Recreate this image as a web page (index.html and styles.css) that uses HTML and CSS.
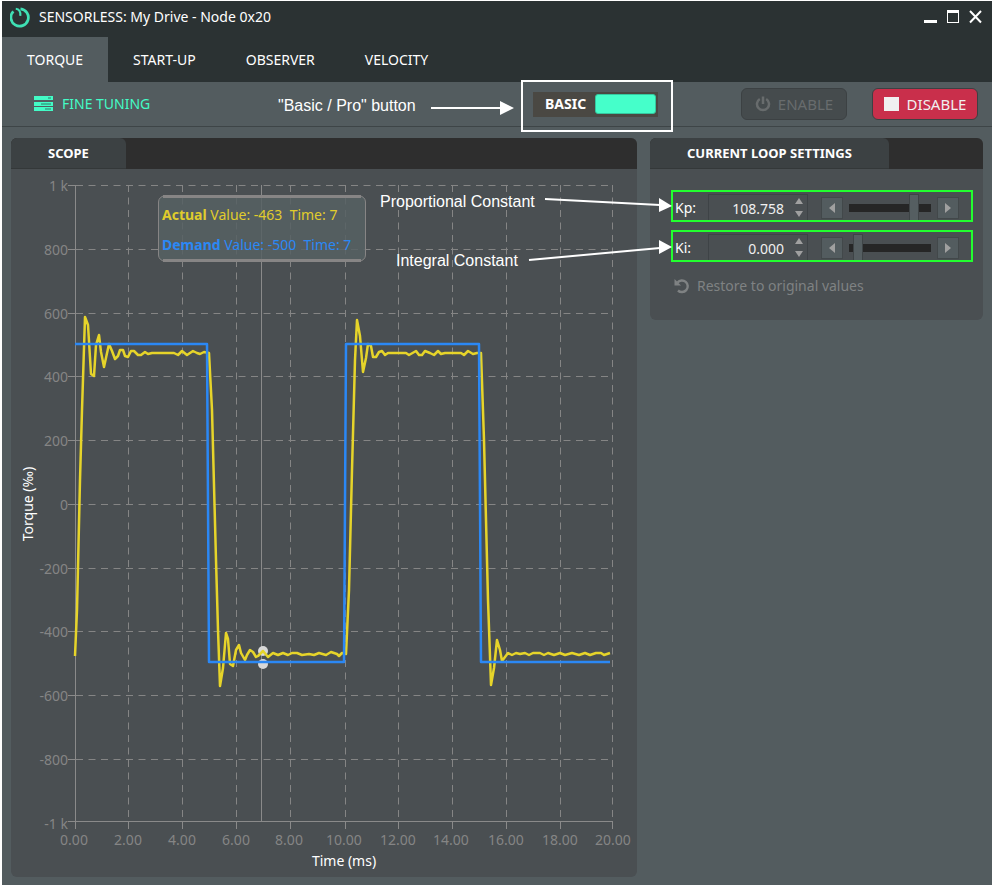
FILE: index.html
```html
<!DOCTYPE html>
<html lang="en">

<head>
  <meta charset="UTF-8">
  <meta name="viewport" content="width=device-width, initial-scale=1.0">
  <title>SENSORLESS: My Drive - Node 0x20</title>
  <link rel="stylesheet" href="styles.css">
</head>

<body>
  <div class="app">
    <header class="titlebar">
      <svg class="logo" viewBox="0 0 20 20" aria-hidden="true">
        <path d="M3.200 4.200A8.300 8.300 0 1 0 10 1.700" />
        <path class="tail" d="M5.500 1.700C8.500 2 10.200 4.500 9.800 8.500" />
      </svg>
      <h1>SENSORLESS: My Drive - Node 0x20</h1>
      <div class="window-buttons">
        <button type="button" aria-label="Minimize">
          <svg viewBox="0 0 14 14"><path d="M1 10h13v3H1z" /></svg>
        </button>
        <button type="button" aria-label="Maximize">
          <svg viewBox="0 0 14 14"><path d="M1 0h12v13H1zM2 3v9h10V3z" fill-rule="evenodd" /></svg>
        </button>
        <button type="button" aria-label="Close">
          <svg viewBox="0 0 14 14"><path class="cross" d="M1 1l11 11.500M12 1L1 12.500" /></svg>
        </button>
      </div>
    </header>

    <nav class="tabs">
      <a class="current" href="#torque">TORQUE</a>
      <a href="#startup">START-UP</a>
      <a href="#observer">OBSERVER</a>
      <a href="#velocity">VELOCITY</a>
    </nav>

    <div class="toolbar">
      <h2 class="tuning">
        <svg viewBox="0 0 20 16" aria-hidden="true">
          <path d="M0 0h19v4H0zM0 6h19v4H0zM0 11h19v4H0z" />
          <path class="hole" d="M14 1.500h3v1h-3zM7 7.500h10v1H7zM11 12.500h6v1h-6z" />
        </svg>
        FINE TUNING
      </h2>
      <label class="mode">
        BASIC
        <input type="checkbox" checked>
      </label>
      <div class="actions">
        <button type="button" class="enable" disabled>
          <svg viewBox="0 0 16 16" aria-hidden="true"><path d="M4.800 3A6 6 0 1 0 11.200 3M8 0.500V8" /></svg>
          ENABLE
        </button>
        <button type="button" class="disable">
          <svg viewBox="0 0 16 16" aria-hidden="true"><path d="M0 1h15v14H0z" /></svg>
          DISABLE
        </button>
      </div>
    </div>

    <main class="content">
      <section class="panel">
        <div class="panel-head">
          <h3>SCOPE</h3>
        </div>
        <svg class="chart" viewBox="11 169 626 708" role="img" aria-label="Torque scope">
          <!-- grid -->
          <g class="grid">
            <path d="M76 185.500H612M76 249.500H612M76 313.500H612M76 376.500H612M76 440.500H612M76 504.500H612M76 568.500H612M76 631.500H612M76 695.500H612M76 759.500H612" />
            <path d="M128.500 185V821M182.500 185V821M236.500 185V821M290.500 185V821M345.500 185V821M398.500 185V821M452.500 185V821M506.500 185V821M560.500 185V821M612.500 185V821" />
          </g>
          <!-- axes -->
          <g class="axis">
            <path d="M75.500 185V829M68 821.500H613" />
            <path d="M68 185.500H75M68 249.500H75M68 313.500H75M68 376.500H75M68 440.500H75M68 504.500H75M68 568.500H75M68 631.500H75M68 695.500H75M68 759.500H75" />
            <path d="M128.500 821V829M182.500 821V829M236.500 821V829M290.500 821V829M345.500 821V829M398.500 821V829M452.500 821V829M506.500 821V829M560.500 821V829M612.500 821V829" />
            <path d="M261.500 185V821" />
          </g>
          <g class="labels labels-y">
            <text x="68" y="191">1 k</text>
            <text x="68" y="255">800</text>
            <text x="68" y="319">600</text>
            <text x="68" y="382">400</text>
            <text x="68" y="446">200</text>
            <text x="68" y="510">0</text>
            <text x="68" y="574">-200</text>
            <text x="68" y="637">-400</text>
            <text x="68" y="701">-600</text>
            <text x="68" y="765">-800</text>
            <text x="68" y="829">-1 k</text>
          </g>
          <g class="labels labels-x">
            <text x="74" y="845">0.00</text>
            <text x="128" y="845">2.00</text>
            <text x="182" y="845">4.00</text>
            <text x="236" y="845">6.00</text>
            <text x="289" y="845">8.00</text>
            <text x="344" y="845">10.00</text>
            <text x="398" y="845">12.00</text>
            <text x="451" y="845">14.00</text>
            <text x="506" y="845">16.00</text>
            <text x="560" y="845">18.00</text>
            <text x="613" y="845">20.00</text>
          </g>
          <text class="axis-title" x="344" y="866">Time (ms)</text>
          <text class="axis-title" transform="translate(33 504) rotate(-90)">Torque (‰)</text>

          <!-- traces -->
          <circle class="marker" cx="263" cy="651" r="5" />
          <circle class="marker" cx="263" cy="664" r="5" />
          <polyline class="trace actual" points="75,656 77,610 80,480 82,410 85,317 88,325 91,374 94,376 96,345 99,335 101,352 104,367 109,344 112,351 115,359 118,356 120,350 123,350 125,356 128,357 131,351 134,351 138,355 141,355 145,352 148,354 152,353 174,353 178,355 182,351 187,355 193,351 197,353 200,354 204,352 209,353 212,410 216,560 218,630 220,686 223,668 226,633 228,639 230,664 233,666 236,650 239,645 241,653 245,660 247,655 250,650 253,652 256,657 258,656 263,651 268,657 273,653 278,655 283,653 288,655 292,653 297,653 302,655 309,654 314,655 319,653 326,655 331,652 337,654 339,656 342,653 346,654 349,590 352,470 355,360 357,320 360,336 363,372 366,358 368,344 371,346 373,357 376,357 379,352 382,351 385,355 388,353 406,353 409,355 416,351 419,355 422,355 425,351 430,353 434,355 438,351 441,354 445,353 461,353 464,355 468,351 473,354 477,353 481,353 484,440 488,600 491,685 494,668 497,640 500,650 502,661 505,657 508,653 512,655 516,653 520,654 525,653 529,655 533,653 540,653 544,655 548,653 554,655 560,653 565,655 572,653 579,655 585,653 590,655 596,653 601,653 604,655 610,653" />
          <polyline class="trace demand" points="75,344 207,344 209,662 344,662 346,344 479,344 481,662 610,662" />

          <!-- readout -->
          <rect class="readout" x="158.500" y="196" width="207" height="65" rx="6" />
          <path class="readout-edge" d="M163 196.500H361M163 260.500H361" />
          <text class="readout-actual" x="162" y="220"><tspan class="series">Actual</tspan> Value: -463&nbsp; Time: 7</text>
          <text class="readout-demand" x="162" y="250"><tspan class="series">Demand</tspan> Value: -500&nbsp; Time: 7</text>
        </svg>
      </section>

      <section class="panel">
        <div class="panel-head">
          <h3>CURRENT LOOP SETTINGS</h3>
        </div>
        <div class="settings">
          <div class="row">
            <label for="kp">Kp:</label>
            <div class="number">
              <input id="kp" type="text" value="108.758">
              <div class="spin">
                <button type="button" aria-label="Increase Kp"><svg viewBox="0 0 8 6"><path d="M0 6L4 0L8 6z" /></svg></button>
                <button type="button" aria-label="Decrease Kp"><svg viewBox="0 0 8 6"><path d="M0 0L4 6L8 0z" /></svg></button>
              </div>
            </div>
            <button type="button" class="step" aria-label="Kp down"><svg viewBox="0 0 6 10"><path d="M6 0L0 5L6 10z" /></svg></button>
            <input class="slider" type="range" min="0" max="100" value="83" aria-label="Kp slider">
            <button type="button" class="step" aria-label="Kp up"><svg viewBox="0 0 6 10"><path d="M0 0L6 5L0 10z" /></svg></button>
          </div>
          <div class="row">
            <label for="ki">Ki:</label>
            <div class="number">
              <input id="ki" type="text" value="0.000">
              <div class="spin">
                <button type="button" aria-label="Increase Ki"><svg viewBox="0 0 8 6"><path d="M0 6L4 0L8 6z" /></svg></button>
                <button type="button" aria-label="Decrease Ki"><svg viewBox="0 0 8 6"><path d="M0 0L4 6L8 0z" /></svg></button>
              </div>
            </div>
            <button type="button" class="step" aria-label="Ki down"><svg viewBox="0 0 6 10"><path d="M6 0L0 5L6 10z" /></svg></button>
            <input class="slider" type="range" min="0" max="100" value="6" aria-label="Ki slider">
            <button type="button" class="step" aria-label="Ki up"><svg viewBox="0 0 6 10"><path d="M0 0L6 5L0 10z" /></svg></button>
          </div>
          <button type="button" class="restore" disabled>
            <svg viewBox="0 0 16 16" aria-hidden="true">
              <path class="arc" d="M3.500 4.500A5.800 5.800 0 1 1 4 12.500" />
              <path d="M0.500 1V7.500H7z" />
            </svg>
            Restore to original values
          </button>
        </div>
      </section>
    </main>

    <!-- callouts over the window -->
    <svg class="callouts" viewBox="0 0 990 300">
      <text x="276" y="110">"Basic / Pro" button</text>
      <text x="378" y="206">Proportional Constant</text>
      <text x="394" y="265">Integral Constant</text>
      <path class="shaft" d="M429 107H500M543 198L658 204M527 259L658 247" />
      <path d="M498 100L512 107L498 114zM657 197L670 205L657 211zM657 239L670 246L657 253z" />
    </svg>
  </div>
</body>

</html>
```
FILE: styles.css
```css
* {
  box-sizing: border-box;
  margin: 0;
  padding: 0;
}

body {
  background-color: #fff;
  color: #fff;
  font: 14px/20px "Noto Sans", "Open Sans", sans-serif;
}

button,
input {
  font: inherit;
  color: inherit;
}

button {
  border: none;
  background: none;
}

h1,
h2 {
  font-size: 14px;
  font-weight: normal;
}

.app {
  position: relative;
  margin: 1px 0 0 2px;
  min-height: calc(100vh - 1px);
  background-color: #535c5f;
}

.titlebar {
  display: flex;
  align-items: center;
  gap: 8px;
  height: 36px;
  padding: 0 9px 4px 8px;
  background-color: #2b3233;
}

.logo {
  width: 21px;
  height: 21px;
  fill: none;
  stroke: #3fe0b4;
  stroke-width: 2.6;
}

.logo .tail {
  stroke-width: 2;
}

.window-buttons {
  display: flex;
  gap: 9px;
  margin-left: auto;
}

.window-buttons svg {
  display: block;
  width: 14px;
  height: 14px;
  fill: #fff;
}

.window-buttons .cross {
  stroke: #fff;
  stroke-width: 2;
}

.tabs {
  display: flex;
  height: 45px;
  background-color: #2b3233;
}

.tabs a {
  padding: 0 25px;
  color: #fff;
  line-height: 45px;
  text-decoration: none;
}

.tabs .current {
  background-color: #535c5f;
}

.toolbar {
  display: flex;
  align-items: center;
  height: 45px;
  padding: 0 14px 0 32px;
  border-bottom: 1px solid #3e4547;
}

.tuning {
  display: flex;
  align-items: center;
  gap: 8px;
  color: #43fbc6;
}

.tuning svg {
  width: 20px;
  height: 16px;
  fill: #43fbc6;
}

.tuning .hole {
  fill: #2f7a68;
}

.mode {
  position: relative;
  display: flex;
  align-items: center;
  justify-content: space-between;
  width: 125px;
  height: 25px;
  margin-left: auto;
  padding: 0 2px 0 12px;
  background-color: #4a4843;
  font-weight: bold;
}

/* frame round the switch */
.mode::after {
  content: "";
  position: absolute;
  top: -12px;
  right: -15px;
  bottom: -15px;
  left: -12px;
  border: 2px solid #fff;
}

.mode input {
  appearance: none;
  width: 61px;
  height: 20px;
  border: 1px solid #35c79f;
  border-radius: 3px;
  background-color: #45ffca;
}

.actions {
  display: flex;
  gap: 25px;
  margin-left: 83px;
}

.actions button {
  display: flex;
  align-items: center;
  justify-content: center;
  gap: 7px;
  width: 106px;
  height: 32px;
  border: 1px solid #3c4143;
  border-radius: 6px;
  font-size: 15px;
}

.actions svg {
  width: 16px;
  height: 16px;
}

.enable {
  background-color: #454b4d;
  color: #686c6d;
}

.enable svg {
  fill: none;
  stroke: #686c6d;
  stroke-width: 2.5;
}

.disable {
  background-color: #c92f4b;
  color: #f0f0f0;
}

.disable svg {
  fill: #f0f0f0;
}

.content {
  display: grid;
  grid-template-columns: 1fr 333px;
  align-items: start;
  gap: 13px;
  padding: 11px 9px 8px;
}

.panel {
  overflow: hidden;
  border-radius: 6px;
  background-color: #4a4f52;
}

.panel-head {
  display: flex;
  height: 31px;
  background-color: #2e2e2e;
}

.panel-head h3 {
  padding: 0 37px;
  border-bottom: 1px solid #343839;
  border-top-right-radius: 6px;
  background-color: #3c4143;
  font-size: 13px;
  line-height: 31px;
}

.chart {
  display: block;
  width: 100%;
  height: auto;
}

.grid path {
  fill: none;
  stroke: #858585;
  stroke-dasharray: 7 5.5;
}

.axis path {
  fill: none;
  stroke: #8a8a8a;
}

.labels {
  fill: #858585;
}

.labels-y {
  text-anchor: end;
}

.labels-x,
.axis-title {
  text-anchor: middle;
}

.axis-title {
  fill: #fff;
}

.marker {
  fill: #d8d8d8;
}

.trace {
  fill: none;
  stroke-width: 2.5;
  stroke-linejoin: round;
}

.actual {
  stroke: #e6d42a;
}

.demand {
  stroke: #2b88f5;
}

.readout {
  fill: #566063;
  fill-opacity: .85;
  stroke: #878585;
}

.readout-edge {
  stroke: #878585;
  stroke-width: 3;
}

.readout-actual {
  fill: #e0cc2c;
}

.readout-demand {
  fill: #2b88f5;
}

.series {
  font-weight: bold;
}

.settings {
  padding: 21px 10px 24px 21px;
}

.row {
  display: flex;
  align-items: center;
  height: 32px;
  margin-bottom: 8px;
  padding-left: 2px;
  overflow: hidden;
  border: 2px solid #22ff2f;
}

.row label {
  width: 33px;
  padding-top: 4px;
}

.number {
  display: flex;
  align-self: flex-end;
  width: 100px;
  height: 26px;
  margin-right: 13px;
  border: 1px solid #3e4346;
  border-bottom: none;
}

.number input {
  flex: 1;
  min-width: 0;
  padding: 2px 7px 0 0;
  border: none;
  background: none;
  color: #f0f0f0;
  text-align: right;
}

.spin {
  display: flex;
  flex-direction: column;
  justify-content: space-between;
  width: 16px;
  padding: 3px 4px;
}

.spin svg,
.step svg {
  display: block;
  fill: #a0a0a0;
}

.spin svg {
  width: 8px;
  height: 6px;
}

.step {
  display: flex;
  align-items: center;
  justify-content: center;
  width: 22px;
  height: 22px;
  margin-top: 4px;
  border: 1px solid #42484a;
  background-color: #535c5f;
}

.step svg {
  width: 6px;
  height: 10px;
}

.slider {
  appearance: none;
  align-self: flex-end;
  width: 82px;
  height: 26px;
  margin: 0 6px;
  background: none;
}

.slider::-webkit-slider-runnable-track {
  height: 26px;
  background: linear-gradient(#262626, #262626) 0 10px / 100% 8px no-repeat;
}

.slider::-webkit-slider-thumb {
  appearance: none;
  width: 10px;
  height: 26px;
  border: 1px solid #3e4446;
  border-bottom: none;
  background-color: #555e61;
}

.restore {
  display: flex;
  align-items: center;
  gap: 7px;
  margin: 14px 0 0 3px;
  color: #7f8283;
}

.restore svg {
  width: 16px;
  height: 16px;
  fill: #7f8283;
}

.restore .arc {
  fill: none;
  stroke: #7f8283;
  stroke-width: 2.4;
}

.callouts {
  position: absolute;
  top: 0;
  left: 0;
  width: 990px;
  height: 300px;
  fill: #fff;
  font: 16px "Liberation Sans", Arial, sans-serif;
  pointer-events: none;
}

.callouts .shaft {
  stroke: #fff;
  stroke-width: 2;
}
```
